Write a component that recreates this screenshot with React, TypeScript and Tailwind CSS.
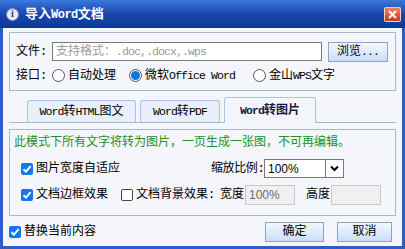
import React from 'react'

const cjk = "font-['Liberation_Mono','Noto_Sans_CJK_SC',monospace]"

// half-width latin text, like the bitmap font of the dialog
function L({ children }: { children: React.ReactNode }) {
  return <span className="text-[11.5px] tracking-[-0.9px]">{children}</span>
}

function Radio({ checked }: { checked?: boolean }) {
  return (
    <span className="w-[13px] h-[13px] rounded-full border border-[#555] bg-white flex items-center justify-center shrink-0">
      {checked && <span className="w-[9px] h-[9px] rounded-full bg-[#0a74e8]" />}
    </span>
  )
}

function Check({ checked }: { checked?: boolean }) {
  return (
    <span
      className={`w-[12px] h-[12px] rounded-[2px] flex items-center justify-center shrink-0 ${
        checked ? 'bg-[#1277ee]' : 'bg-white border border-[#444]'
      }`}
    >
      {checked && (
        <svg width="10" height="10" viewBox="0 0 10 10">
          <path d="M1.5 5.2 L4 7.6 L8.6 2.2" stroke="white" strokeWidth="2" fill="none" />
        </svg>
      )}
    </span>
  )
}

function Btn({ children, w }: { children: React.ReactNode; w: string }) {
  return (
    <button
      className={`${w} h-[20px] border border-[#8aa4c4] bg-gradient-to-b from-[#f3f8ff] to-[#c9def6] text-[12px] text-black flex items-center justify-center`}
    >
      {children}
    </button>
  )
}

export default function App() {
  return (
    <div className={`w-[405px] h-[249px] bg-[#2a5ec8] flex flex-col ${cjk} text-[12px] text-black leading-none whitespace-nowrap`}>
      {/* Title bar */}
      <div className="h-[28px] shrink-0 flex items-center px-[6px] bg-gradient-to-b from-[#3a78dc] via-[#1a47ae] to-[#0c3898]">
        <span className="w-[13px] h-[13px] rounded-full bg-[#e8ecf4] border border-[#7a8aa8] flex items-center justify-center text-[10px] font-bold text-[#1d3f86] font-['Liberation_Serif',serif]">
          i
        </span>
        <span className="ml-[6px] text-white text-[13px] font-bold">
          导入<span className="text-[12px] tracking-[-0.5px]">Word</span>文档
        </span>
        <span className="ml-auto mr-[-2px] w-[17px] h-[15px] rounded-[2px] border border-white/70 bg-gradient-to-b from-[#f08060] to-[#c83a1c] flex items-center justify-center">
          <svg width="9" height="9" viewBox="0 0 9 9">
            <path d="M1 1 L8 8 M8 1 L1 8" stroke="white" strokeWidth="2" />
          </svg>
        </span>
      </div>

      {/* Body */}
      <div className="flex-1 mx-[3px] mb-[3px] bg-[#f5f6fc] flex flex-col px-[6px] pt-[4px]">
        {/* File group */}
        <div className="h-[59px] border border-[#a9b6d0] flex flex-col px-[6px] pt-[9px] gap-[7px]">
          <div className="flex items-center h-[19px]">
            <span className="w-[36px]">文件:</span>
            <span className="w-[270px] h-[19px] border border-[#7a7a7a] bg-white flex items-center px-[3px] text-[#999]">
              支持格式：<L>.doc,.docx,.wps</L>
            </span>
            <span className="ml-[6px]">
              <Btn w="w-[60px]">
                浏览<L>...</L>
              </Btn>
            </span>
          </div>
          <div className="flex items-center h-[15px]">
            <span className="w-[36px]">接口:</span>
            <Radio />
            <span className="ml-[3px] w-[61px]">自动处理</span>
            <Radio checked />
            <span className="ml-[3px] w-[108px]">
              微软<L>Office Word</L>
            </span>
            <Radio />
            <span className="ml-[3px]">
              金山<L>WPS</L>文字
            </span>
          </div>
        </div>

        {/* Tabs */}
        <div className="flex items-end h-[32px] border-b border-[#a9b6d0] pl-[18px] gap-[4px]">
          <span className="w-[109px] h-[22px] rounded-t-[3px] border border-b-0 border-[#a9c2e8] bg-[#e7f0fc] flex items-center justify-center">
            <L>Word</L>转<L>HTML</L>图文
          </span>
          <span className="w-[80px] h-[22px] rounded-t-[3px] border border-b-0 border-[#a9c2e8] bg-[#e7f0fc] flex items-center justify-center">
            <L>Word</L>转<L>PDF</L>
          </span>
          <span className="w-[92px] h-[26px] mb-[-1px] rounded-t-[3px] border border-b-0 border-[#a9c2e8] bg-[#f5f6fc] flex items-center justify-center font-bold text-[#1a1a40]">
            <L>Word</L>转图片
          </span>
        </div>

        {/* Panel */}
        <div className="mt-[6px] h-[87px] border border-[#a9b6d0] flex flex-col px-[4px] pt-[6px]">
          <span className="text-[#23901e] h-[14px] flex items-center">此模式下所有文字将转为图片，一页生成一张图，不可再编辑。</span>
          <div className="flex items-center mt-[9px] h-[19px] pl-[7px]">
            <Check checked />
            <span className="ml-[3px] w-[175px]">图片宽度自适应</span>
            <span className="w-[53px] tracking-[-0.4px]">缩放比例:</span>
            <span className="w-[80px] shrink-0 h-[19px] border border-[#7a7a7a] bg-white flex items-center">
              <span className="flex-1 pl-[3px] font-['Liberation_Sans',sans-serif]">100%</span>
              <span className="w-[18px] h-full border-l border-[#7a7a7a] flex items-center justify-center">
                <svg width="9" height="7" viewBox="0 0 9 7">
                  <path d="M1 1.5 L4.5 5 L8 1.5" stroke="black" strokeWidth="2" fill="none" />
                </svg>
              </span>
            </span>
          </div>
          <div className="flex items-center mt-[7px] h-[20px] pl-[7px]">
            <Check checked />
            <span className="ml-[3px] w-[85px]">文档边框效果</span>
            <Check />
            <span className="ml-[3px] w-[84px]">文档背景效果:</span>
            <span className="w-[25px]">宽度</span>
            <span className="w-[50px] h-[20px] border border-[#c8c8c8] bg-[#f0f0f0] flex items-center pl-[3px] text-[#6a6a6a] font-['Liberation_Sans',sans-serif]">
              100%
            </span>
            <span className="ml-[11px] w-[25px]">高度</span>
            <span className="w-[50px] h-[20px] border border-[#c8c8c8] bg-[#f0f0f0]" />
          </div>
        </div>

        {/* Footer */}
        <div className="flex items-center mt-[6px] h-[20px]">
          <Check checked />
          <span className="ml-[3px]">替换当前内容</span>
          <span className="ml-auto flex gap-[13px] mr-[4px]">
            <Btn w="w-[59px]">确定</Btn>
            <Btn w="w-[55px]">取消</Btn>
          </span>
        </div>
      </div>
    </div>
  )
}
